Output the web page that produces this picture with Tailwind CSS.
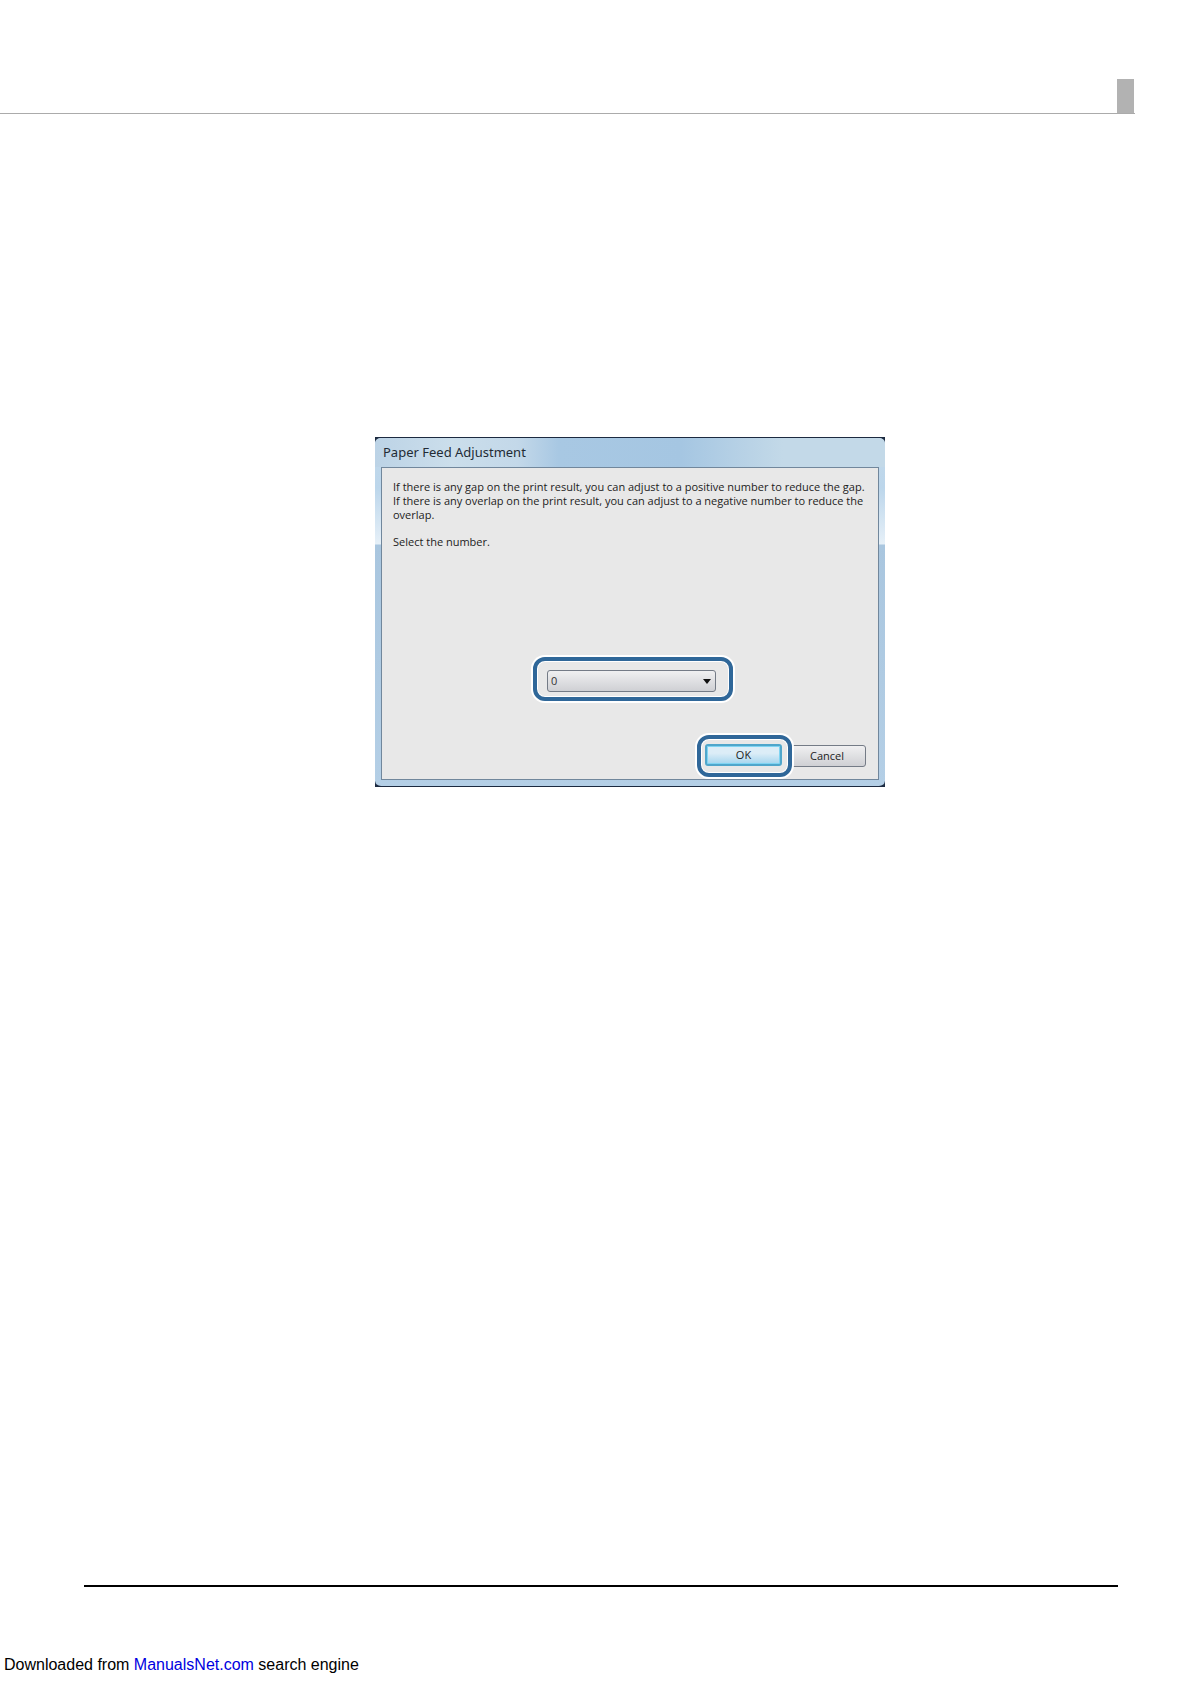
<!DOCTYPE html>
<html lang="en">
<head>
  <meta charset="UTF-8" />
  <meta name="viewport" content="width=device-width, initial-scale=1.0" />
  <title>Paper Feed Adjustment</title>
  <script src="https://cdn.jsdelivr.net/npm/@tailwindcss/browser@4"></script>
</head>
<body class="flex min-h-screen flex-col bg-white text-black font-['Liberation_Sans',sans-serif]">

  <!-- Header rule with page tab -->
  <header class="mr-[55px] flex justify-end border-b border-[#ababab] pt-[79px]">
    <div class="mr-px h-[34px] w-[17px] bg-[#b2b2b2]"></div>
  </header>

  <main class="mt-[323px] pl-[375px]">
    <!-- Dialog window -->
    <section aria-labelledby="dialog-title" class="w-full max-w-[510px] bg-[#1c2a40] font-['Open_Sans',sans-serif]">
      <div class="rounded-md border-y border-[#1c2a40] bg-[linear-gradient(to_bottom,#c3d9ea_0,#bcd6eb_50px,#e6f0f8_106px,#a9c6df_107px,#b4cfe6_100%)] px-[6px] pb-[6px]">
        <h1 id="dialog-title" class="-mx-[6px] h-[29px] rounded-t-md bg-[linear-gradient(to_right,#bcd3e6_0%,#cbdeeb_15%,#c3d8e9_28%,#a8c8e3_36%,#a5c6e2_60%,#c3d9e8_80%,#c3d9e8_100%)] pl-2 font-['Noto_Sans',sans-serif] text-[13px] leading-[29px] text-[#222b35]">Paper Feed Adjustment</h1>

        <div class="border border-[#71879c] bg-[#e8e8e8] pt-3 pr-3 pb-[2px] pl-[11px] text-[11px] leading-[14px] text-[#1c1c1c]">
          <p class="whitespace-nowrap">If there is any gap on the print result, you can adjust to a positive number to reduce the gap.<br />If there is any overlap on the print result, you can adjust to a negative number to reduce the<br />overlap.</p>
          <p class="mt-[13px]"><label for="number">Select the number.</label></p>

          <!-- Number drop-down -->
          <div class="mt-[108px] ml-[140px] w-[200px] rounded-xl border-4 border-[#2f6799] pt-[9px] pr-[13px] pb-[5px] pl-[10px] shadow-[0_0_0_2px_#fff,inset_0_0_0_1px_#fff]">
            <div class="relative">
              <select id="number" class="block h-[22px] w-full appearance-none rounded-[3px] border border-[#747b86] bg-linear-to-b from-[#f0f0f1] to-[#cfd0d4] pl-[3px] text-[11px] text-[#333]">
                <option>0</option>
                <option>1</option>
                <option>-1</option>
              </select>
              <svg class="pointer-events-none absolute top-[9px] right-[5px] h-[5px] w-[8px]" viewBox="0 0 8 5"><path d="M0 0h8L4 5z" fill="#111" /></svg>
            </div>
          </div>

          <!-- Buttons -->
          <div class="mt-[34px] flex items-center justify-end">
            <div class="relative rounded-xl border-4 border-[#2f6799] bg-[#e8e8e8] pt-[5px] pr-[6px] pb-[7px] pl-1 shadow-[0_0_0_2px_#fff,inset_0_0_0_1px_#fff]">
              <button type="button" class="block h-[22px] w-[77px] rounded-[3px] border-2 border-[#4fa6cb] bg-linear-to-b from-[#dcedf7] from-40% to-[#a4d5ee] shadow-[inset_0_0_0_1px_#7fd4f2]">OK</button>
            </div>
            <button type="button" class="-ml-1 h-[22px] w-[78px] rounded-[3px] border border-[#747b86] bg-linear-to-b from-[#f0f0f1] to-[#cfd0d4]">Cancel</button>
          </div>
        </div>
      </div>
    </section>
  </main>

  <!-- Footer -->
  <footer class="mt-auto">
    <hr class="mr-[72px] ml-[84px] border-t-2 border-black" />
    <p class="mt-[66px] mb-[7px] pl-1 text-base leading-6">Downloaded from <a href="#" class="text-[#0000e0]">ManualsNet.com</a> search engine</p>
  </footer>

</body>
</html>
